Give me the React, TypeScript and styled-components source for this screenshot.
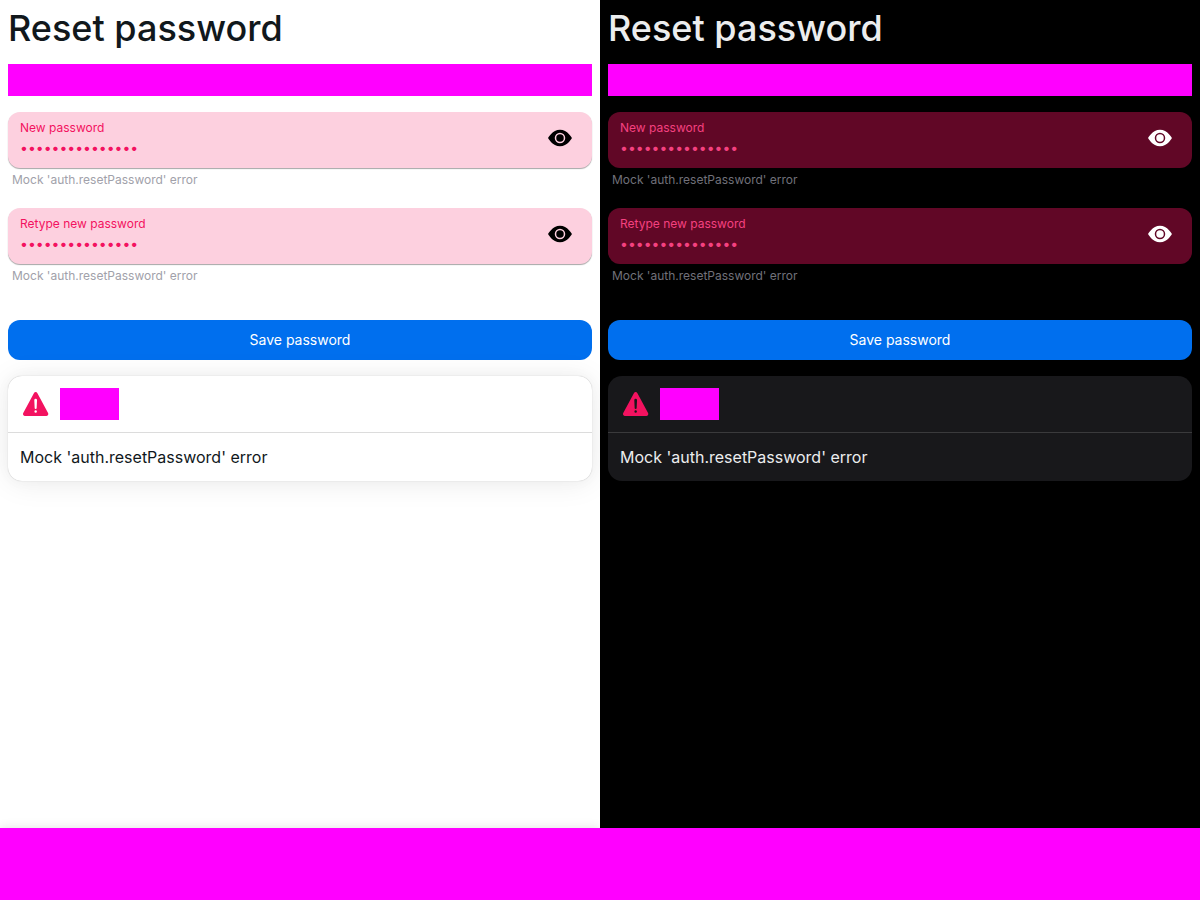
import React, { useId, useState } from "react";
import styled, { createGlobalStyle, ThemeProvider } from "styled-components";
import { BsEyeFill } from "react-icons/bs";
import { IoWarning } from "react-icons/io5";

const light = {
  background: "#ffffff",
  foreground: "#11181c",
  muted: "#a1a1aa",
  dangerSurface: "#fdd0df",
  dangerText: "#f31260",
  icon: "#000000",
  card: "#ffffff",
  divider: "rgba(17, 17, 17, 0.15)",
  fieldShadow: "0 1px 1px rgba(0, 0, 0, 0.35)",
  cardShadow:
    "0 0 15px rgba(0, 0, 0, 0.03), 0 2px 30px rgba(0, 0, 0, 0.08), 0 0 1px rgba(0, 0, 0, 0.3)",
  footerShadow: "0 0 10px rgba(0, 0, 0, 0.12)",
};

const dark: typeof light = {
  background: "#000000",
  foreground: "#ecedee",
  muted: "#71717a",
  dangerSurface: "#610726",
  dangerText: "#f54180",
  icon: "#ffffff",
  card: "#18181b",
  divider: "rgba(255, 255, 255, 0.15)",
  fieldShadow: "none",
  cardShadow: "none",
  footerShadow: "none",
};

const GlobalStyle = createGlobalStyle`
  *, *::before, *::after { box-sizing: border-box; }
  body {
    margin: 0;
    font-family: Inter, "Liberation Sans", sans-serif;
    font-size: 16px;
    line-height: 24px;
    text-rendering: optimizeSpeed;
  }
`;

const Split = styled.div`
  display: grid;
  grid-template-columns: repeat(2, minmax(0, 1fr));
  min-height: 100vh;
`;

const Pane = styled.section`
  display: flex;
  flex-direction: column;
  overflow: hidden;
  background: ${(p) => p.theme.background};
  color: ${(p) => p.theme.foreground};
`;

const Content = styled.main`
  flex: 1;
  display: flex;
  flex-direction: column;
  gap: 16px;
  padding: 8px;
`;

const Title = styled.h1`
  margin: 0;
  font-size: 36px;
  line-height: 40px;
  font-weight: 500;
`;

const Banner = styled.div`
  height: 32px;
  background: #ff00ff;
`;

const Form = styled.form`
  display: flex;
  flex-direction: column;
  gap: 16px;
`;

const Field = styled.div`
  display: flex;
  flex-direction: column;
`;

const FieldBox = styled.div`
  display: flex;
  align-items: center;
  height: 56px;
  padding: 8px 12px;
  border-radius: 12px;
  background: ${(p) => p.theme.dangerSurface};
  box-shadow: ${(p) => p.theme.fieldShadow};
`;

const FieldText = styled.div`
  flex: 1;
  display: flex;
  flex-direction: column;
  color: ${(p) => p.theme.dangerText};
`;

const Label = styled.label`
  font-size: 12px;
  line-height: 16px;
`;

const Input = styled.input`
  height: 24px;
  padding: 0;
  border: 0;
  outline: 0;
  background: transparent;
  color: inherit;
  font: inherit;
  font-size: 14px;
  text-rendering: inherit;
`;

const EyeButton = styled.button`
  display: flex;
  align-self: flex-start;
  margin: 0;
  padding: 6px 8px;
  border: 0;
  background: transparent;
  color: ${(p) => p.theme.icon};
  font-size: 24px;
  cursor: pointer;
`;

const Hint = styled.p`
  margin: 0;
  padding: 4px;
  font-size: 12px;
  line-height: 16px;
  color: ${(p) => p.theme.muted};
`;

const SaveButton = styled.button`
  height: 40px;
  margin: 16px 0 0;
  padding: 0 16px;
  border: 0;
  border-radius: 12px;
  background: #006fee;
  color: #ffffff;
  font: inherit;
  font-size: 14px;
  line-height: 20px;
  text-rendering: inherit;
  cursor: pointer;
`;

const Card = styled.div`
  border-radius: 14px;
  background: ${(p) => p.theme.card};
  box-shadow: ${(p) => p.theme.cardShadow};
`;

const CardHeader = styled.div`
  display: flex;
  align-items: center;
  gap: 8px;
  padding: 12px;
  border-bottom: 1px solid ${(p) => p.theme.divider};
  color: #f31260;
  font-size: 32px;
`;

const CardTitleBlock = styled.div`
  width: 59px;
  height: 32px;
  background: #ff00ff;
`;

const CardBody = styled.p`
  margin: 0;
  padding: 12px;
`;

const Footer = styled.footer`
  height: 72px;
  background: #ff00ff;
  box-shadow: ${(p) => p.theme.footerShadow};
`;

const errorText = "Mock 'auth.resetPassword' error";

function PasswordField({ label }: { label: string }) {
  const id = useId();
  const [value, setValue] = useState("newpassword1234");
  const [shown, setShown] = useState(false);
  return (
    <Field>
      <FieldBox>
        <FieldText>
          <Label htmlFor={id}>{label}</Label>
          <Input
            id={id}
            type={shown ? "text" : "password"}
            value={value}
            aria-invalid
            aria-describedby={`${id}-hint`}
            onChange={(e) => setValue(e.target.value)}
          />
        </FieldText>
        <EyeButton
          type="button"
          aria-label={shown ? "Hide password" : "Show password"}
          onClick={() => setShown(!shown)}
        >
          <BsEyeFill />
        </EyeButton>
      </FieldBox>
      <Hint id={`${id}-hint`}>{errorText}</Hint>
    </Field>
  );
}

function ResetPassword({ theme }: { theme: typeof light }) {
  return (
    <ThemeProvider theme={theme}>
      <Pane>
        <Content>
          <Title>Reset password</Title>
          <Banner />
          <Form onSubmit={(e) => e.preventDefault()}>
            <PasswordField label="New password" />
            <PasswordField label="Retype new password" />
            <SaveButton type="submit">Save password</SaveButton>
          </Form>
          <Card role="alert">
            <CardHeader>
              <IoWarning />
              <CardTitleBlock />
            </CardHeader>
            <CardBody>{errorText}</CardBody>
          </Card>
        </Content>
        <Footer />
      </Pane>
    </ThemeProvider>
  );
}

export default function App() {
  return (
    <>
      <GlobalStyle />
      <Split>
        <ResetPassword theme={light} />
        <ResetPassword theme={dark} />
      </Split>
    </>
  );
}
